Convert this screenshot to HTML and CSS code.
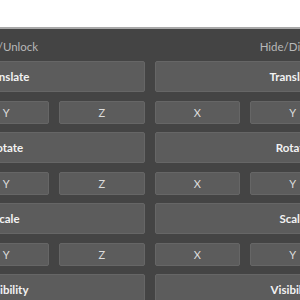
FILE: index.html
```html
<!DOCTYPE html>
<html lang="en">
<head>
  <meta charset="UTF-8" />
  <title>Transform Tools</title>
  <link rel="stylesheet" href="styles.css">
</head>
<body>
  <header class="top"></header>

  <main class="panel">
    <section class="column">
      <div class="column-title">Lock/Unlock</div>
      <button class="big">Translate</button>
      <div class="axes">
        <button>X</button><button>Y</button><button>Z</button>
      </div>
      <button class="big">Rotate</button>
      <div class="axes">
        <button>X</button><button>Y</button><button>Z</button>
      </div>
      <button class="big">Scale</button>
      <div class="axes">
        <button>X</button><button>Y</button><button>Z</button>
      </div>
      <button class="big">Visibility</button>
    </section>

    <section class="column">
      <div class="column-title">Hide/Display</div>
      <button class="big">Translate</button>
      <div class="axes">
        <button>X</button><button>Y</button><button>Z</button>
      </div>
      <button class="big">Rotate</button>
      <div class="axes">
        <button>X</button><button>Y</button><button>Z</button>
      </div>
      <button class="big">Scale</button>
      <div class="axes">
        <button>X</button><button>Y</button><button>Z</button>
      </div>
      <button class="big">Visibility</button>
    </section>
  </main>
</body>
</html>
```

FILE: styles.css
```css
/* Base */
body {
  margin: 0;
  background-color: #444444;
  font-family: 'Lato', 'Open Sans', sans-serif;
  overflow: hidden;
}

.top {
  height: 27px;
  background-color: #ffffff;
  border-bottom: 2px solid #a8a8a8;
}

/* Panel is wider than the window, centred on it */
.panel {
  width: 563px;
  margin-left: calc(50% - 282px);
  padding-top: 8px;
  display: grid;
  grid-template-columns: 1fr 1fr;
  gap: 10px;
}

.column {
  display: flex;
  flex-direction: column;
}

.column-title {
  height: 20px;
  line-height: 20px;
  margin-bottom: 4px;
  text-align: center;
  font-size: 11.5px;
  color: #b8b8b8;
}

button {
  font-family: inherit;
  background-color: #5c5c5c;
  border: 1px solid #666666;
  border-radius: 2px;
  color: #e6e6e6;
  cursor: pointer;
  padding: 0;
}

.big {
  height: 31px;
  margin-bottom: 9px;
  font-size: 11.5px;
  font-weight: 700;
  color: #f2f2f2;
}

.axes {
  display: grid;
  grid-template-columns: repeat(3, 1fr);
  gap: 10px;
  margin-bottom: 8px;
}

.axes button {
  height: 23px;
  font-size: 11px;
  color: #dcdcdc;
}
```
